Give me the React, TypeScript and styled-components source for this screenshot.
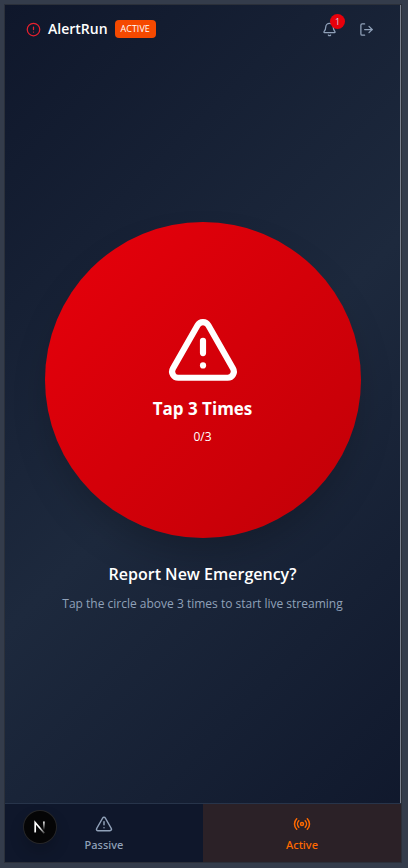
import React, { useState } from "react";
import styled, { createGlobalStyle } from "styled-components";
import { Bell, CircleAlert, LogOut, Radio, TriangleAlert } from "lucide-react";

const GlobalStyle = createGlobalStyle`
  * { box-sizing: border-box; }
  html, body, #root { height: 100%; }
  body {
    margin: 0;
    background: #343c4b;
    font-family: "Open Sans", "Noto Sans", sans-serif;
    color: #ffffff;
  }
  button { font: inherit; color: inherit; border: 0; background: none; padding: 0; cursor: pointer; }
  h1, h2, p { margin: 0; }
`;

const Page = styled.div`
  min-height: 100%;
  display: flex;
  padding: 4px 6px 5px 4px;
`;

const Screen = styled.div`
  flex: 1;
  display: flex;
  flex-direction: column;
  border: 1px solid #2b303a;
  background: linear-gradient(135deg, #0f172b 0%, #1d293d 50%, #0f172b 100%);
`;

const Body = styled.div`
  flex: 1;
  display: flex;
  flex-direction: column;
  border-right: 1px solid #7c828e;
`;

const Header = styled.header`
  display: flex;
  align-items: center;
  justify-content: space-between;
  height: 48px;
  padding: 0 26px 0 21px;
`;

const Brand = styled.div`
  display: flex;
  align-items: center;
  gap: 7px;
`;

const Title = styled.h1`
  font-size: 14px;
  line-height: 20px;
  font-weight: 600;
`;

const Tag = styled.span`
  padding: 0 6px;
  border-radius: 4px;
  background: #f54900;
  font-size: 9px;
  line-height: 18px;
`;

const Actions = styled.div`
  display: flex;
  align-items: center;
  gap: 22px;
`;

const IconButton = styled.button`
  position: relative;
  display: flex;
  color: #90a1b9;
`;

const Count = styled.span`
  position: absolute;
  top: -8px;
  right: -8px;
  width: 15px;
  height: 15px;
  border-radius: 50%;
  background: #e7000b;
  color: #cad5e2;
  font-size: 9px;
  line-height: 15px;
  text-align: center;
`;

const Main = styled.main`
  flex: 1;
  display: flex;
  flex-direction: column;
  align-items: center;
  justify-content: center;
  padding-bottom: 21px;
`;

const TapCircle = styled.button`
  width: 80%;
  aspect-ratio: 1;
  border-radius: 50%;
  display: flex;
  flex-direction: column;
  align-items: center;
  justify-content: center;
  background: linear-gradient(135deg, #e7000b, #c10007);
  box-shadow: 0 20px 40px -10px rgba(0, 0, 0, 0.25);
`;

const TapLabel = styled.span`
  margin-top: 8px;
  font-size: 17px;
  line-height: 28px;
  font-weight: 700;
`;

const TapCount = styled.span`
  margin-top: 4px;
  font-size: 12px;
  line-height: 20px;
`;

const Prompt = styled.h2`
  margin-top: 24px;
  font-size: 16px;
  line-height: 24px;
  font-weight: 600;
`;

const Hint = styled.p`
  margin-top: 8px;
  font-size: 12px;
  line-height: 20px;
  color: #90a1b9;
`;

const Nav = styled.nav`
  position: relative;
  display: grid;
  grid-template-columns: 1fr 1fr;
  height: 59px;
  border-top: 1px solid #27344a;
  background: #0f172b;
`;

const NavItem = styled.button<{ $active: boolean }>`
  display: flex;
  flex-direction: column;
  align-items: center;
  justify-content: center;
  gap: 4px;
  padding-top: 2px;
  font-family: "Noto Sans", sans-serif;
  font-size: 11px;
  line-height: 16px;
  font-weight: 500;
  color: ${(p) => (p.$active ? "#ff6900" : "#90a1b9")};
  background: ${(p) => (p.$active ? "#2b2127" : "transparent")};
`;

const DevBadge = styled.button`
  position: absolute;
  left: 19px;
  top: 7px;
  width: 32px;
  height: 32px;
  display: flex;
  align-items: center;
  justify-content: center;
  border-radius: 50%;
  background: #050506;
  box-shadow: 0 0 0 1px #262628, 0 8px 16px rgba(0, 0, 0, 0.2);
`;

const NextLogo = () => (
  <svg width="14" height="14" viewBox="0 0 14 14" fill="none" aria-hidden="true">
    <defs>
      <linearGradient id="stem" x1="0" y1="1" x2="0" y2="10" gradientUnits="userSpaceOnUse">
        <stop stopColor="#fff" />
        <stop offset="1" stopColor="#fff" stopOpacity="0" />
      </linearGradient>
      <linearGradient id="diagonal" x1="7" y1="7" x2="12" y2="13" gradientUnits="userSpaceOnUse">
        <stop stopColor="#fff" />
        <stop offset="1" stopColor="#fff" stopOpacity="0.2" />
      </linearGradient>
    </defs>
    <path d="M2.2 12.5V2.5L11.3 13.3" stroke="url(#diagonal)" strokeWidth="1.7" />
    <path d="M10.9 1.5V10.5" stroke="url(#stem)" strokeWidth="1.7" />
  </svg>
);

export default function App() {
  const [taps, setTaps] = useState(0);
  const [tab, setTab] = useState("active");
  return (
    <>
      <GlobalStyle />
      <Page>
        <Screen>
          <Body>
            <Header>
              <Brand>
                <CircleAlert size={15} color="#e7202e" />
                <Title>AlertRun</Title>
                <Tag>ACTIVE</Tag>
              </Brand>
              <Actions>
                <IconButton aria-label="Notifications">
                  <Bell size={15} />
                  <Count>1</Count>
                </IconButton>
                <IconButton aria-label="Log out">
                  <LogOut size={15} />
                </IconButton>
              </Actions>
            </Header>
            <Main>
              <TapCircle onClick={() => setTaps((n) => (n + 1) % 4)}>
                <TriangleAlert size={74} />
                <TapLabel>Tap 3 Times</TapLabel>
                <TapCount>{taps}/3</TapCount>
              </TapCircle>
              <Prompt>Report New Emergency?</Prompt>
              <Hint>Tap the circle above 3 times to start live streaming</Hint>
            </Main>
          </Body>
          <Nav>
            <NavItem $active={tab === "passive"} onClick={() => setTab("passive")}>
              <TriangleAlert size={18} />
              Passive
            </NavItem>
            <NavItem $active={tab === "active"} onClick={() => setTab("active")}>
              <Radio size={18} />
              Active
            </NavItem>
            <DevBadge aria-label="Next.js tools">
              <NextLogo />
            </DevBadge>
          </Nav>
        </Screen>
      </Page>
    </>
  );
}
